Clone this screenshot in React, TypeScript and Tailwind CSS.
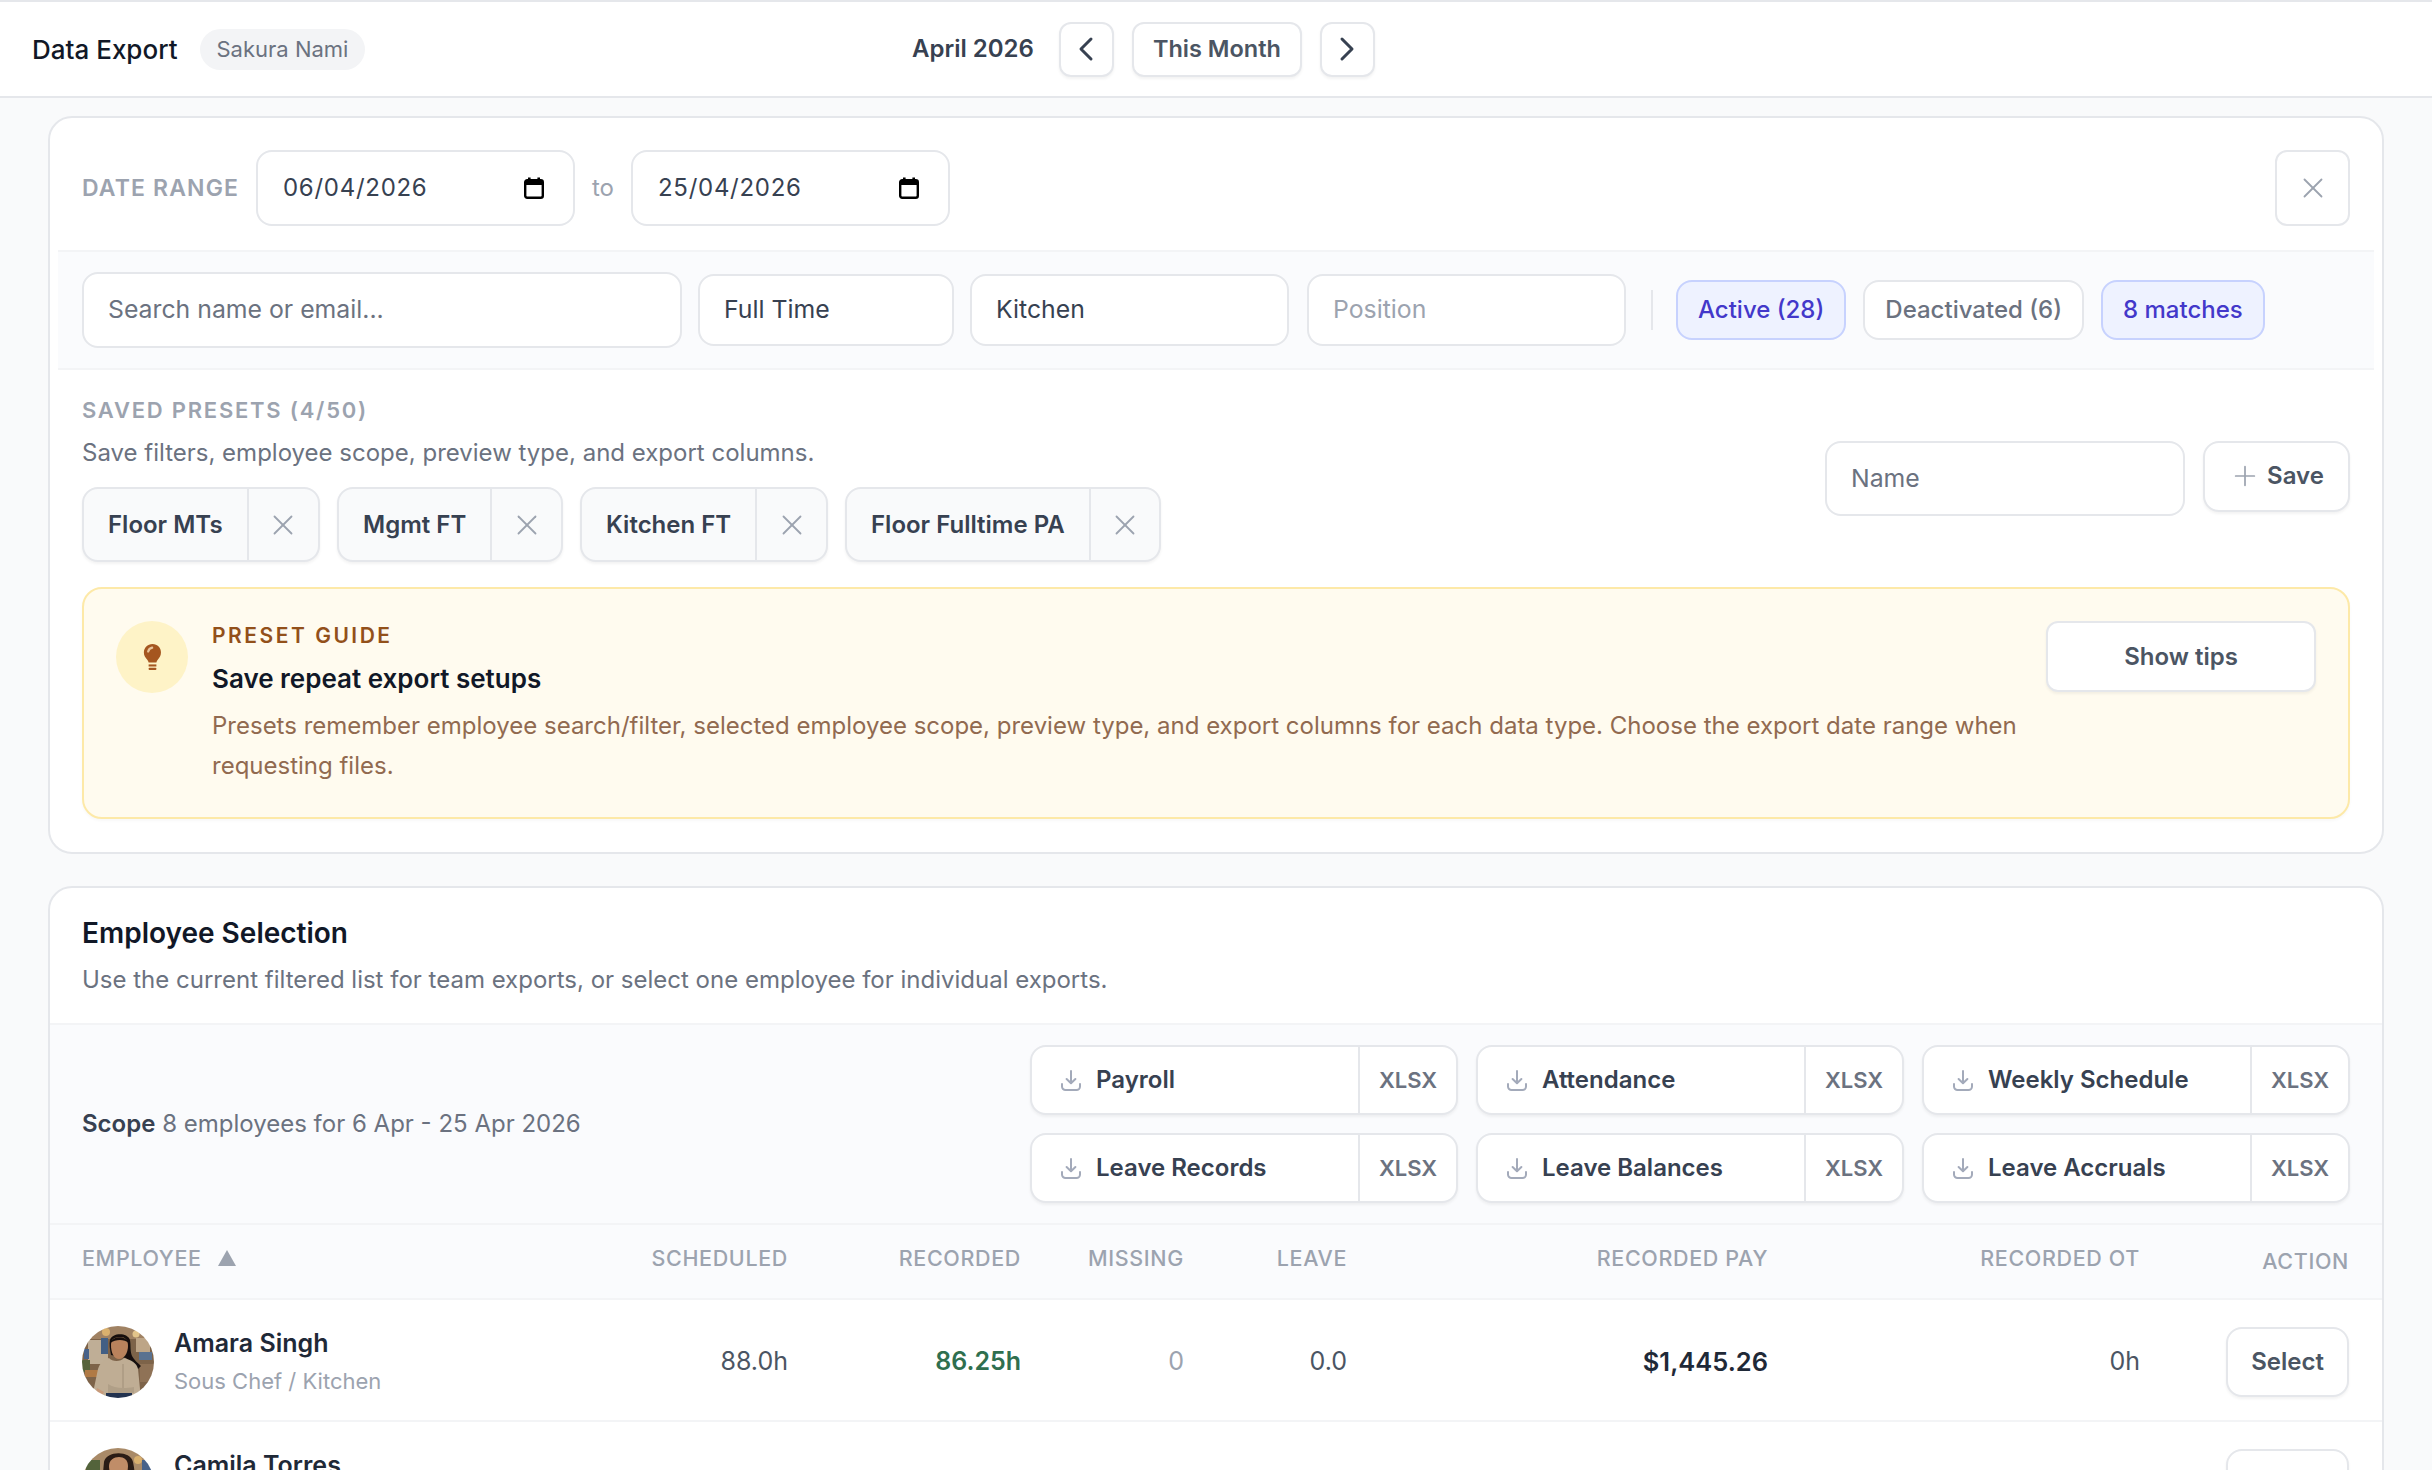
import { ChevronLeft, ChevronRight, X, Plus } from "lucide-react";

function Calendar() {
  return (
    <svg width="20" height="22" viewBox="0 0 20 22" className="shrink-0">
      <rect x="1.2" y="3.2" width="17.6" height="17.6" rx="2" fill="none" stroke="#000" strokeWidth="2.4" />
      <rect x="1" y="3" width="18" height="5" fill="#000" />
      <rect x="4" y="0.5" width="2.6" height="4" fill="#000" />
      <rect x="13.4" y="0.5" width="2.6" height="4" fill="#000" />
    </svg>
  );
}

function DownloadIcon() {
  return (
    <svg width="20" height="21" viewBox="0 0 20 21" fill="none" stroke="#a3aaba" strokeWidth="2" strokeLinecap="round" strokeLinejoin="round" className="shrink-0">
      <path d="M10 1V13" />
      <path d="M5.6 9 10 13.3 14.4 9" />
      <path d="M1 14v2.5A3.5 3.5 0 0 0 4.5 20h11a3.5 3.5 0 0 0 3.5-3.5V14" />
    </svg>
  );
}

function Bulb() {
  return (
    <svg width="19" height="28" viewBox="0 0 22 32">
      <path d="M11 1C5.2 1 1 5.4 1 10.8c0 3.6 1.9 6 3.7 8.2 1 1.2 1.6 2.2 1.8 3.4h9c.2-1.2.8-2.2 1.8-3.4 1.8-2.2 3.5-4.6 3.5-8.2C21 5.4 16.8 1 11 1Z" fill="#a5561f" />
      <path d="M6 9.6C6.6 7.4 8.2 5.8 10.6 5.2" fill="none" stroke="#e9c49c" strokeWidth="2.6" strokeLinecap="round" />
      <rect x="6.5" y="24.6" width="9" height="2.4" fill="#a5561f" />
      <rect x="6.5" y="28.4" width="9" height="2.6" rx="1" fill="#a5561f" />
    </svg>
  );
}

function AmaraAvatar() {
  return (
    <svg width="72" height="72" viewBox="0 0 72 72" className="shrink-0 rounded-full">
      <defs>
        <filter id="soft-a"><feGaussianBlur stdDeviation="0.7" /></filter>
      </defs>
      <g filter="url(#soft-a)">
        <rect width="72" height="72" fill="#7d6349" />
        <rect x="0" y="0" width="72" height="13" fill="#a08264" />
        <rect x="6" y="14" width="20" height="24" fill="#bfae96" />
        <rect x="19" y="12" width="7" height="16" fill="#435f84" />
        <rect x="2" y="23" width="5" height="10" fill="#46628a" />
        <rect x="57" y="26" width="13" height="8" fill="#5a7290" />
        <rect x="54" y="12" width="14" height="14" fill="#bda587" />
        <circle cx="24" cy="6" r="4" fill="#d9b06e" />
        <circle cx="54" cy="8" r="3.5" fill="#e2c48a" />
        <rect x="0" y="34" width="8" height="12" fill="#55643a" />
        <rect x="3" y="44" width="13" height="7" fill="#b07a45" />
        <rect x="58" y="38" width="14" height="18" fill="#8f7256" />
        <path d="M28 14c2-7 17-8 20 0 1 6 0 11 2 16 2 4 6 7 9 10l-3 3c-6-3-10-7-12-11l-15-3c-1-5-2-11-1-15Z" fill="#15110f" />
        <path d="M29 19c0-6 4-8 9-8s8 3 8 9c0 7-4 13-9 13s-8-6-8-14Z" fill="#b9825c" />
        <path d="M28 17c3-7 15-8 19 0-5-4-13-4-19 0Z" fill="#15110f" />
        <path d="M27 32c-6 2-9 5-11 11l-4 19c-1 4 3 8 6 10h36c3-2 4-5 4-9l-2-20c-1-6-7-9-14-11-3 4-12 4-15 0Z" fill="#bfad94" />
        <path d="M41 38v28" stroke="#a08f78" strokeWidth="1" />
        <path d="M26 58c6 4 14 5 26 3v6H26Z" fill="#b09f87" />
        <rect x="24" y="67" width="26" height="5" fill="#203150" />
        <path d="M15 62l-2 6 6 3 3-5Z" fill="#c79a7a" />
      </g>
    </svg>
  );
}

function CamilaAvatar() {
  return (
    <svg width="72" height="72" viewBox="0 0 72 72" className="shrink-0 rounded-full">
      <defs>
        <filter id="soft-c"><feGaussianBlur stdDeviation="0.7" /></filter>
      </defs>
      <g filter="url(#soft-c)">
        <rect width="72" height="72" fill="#a98a68" />
        <rect x="4" y="12" width="14" height="14" fill="#52633a" />
        <rect x="60" y="12" width="12" height="20" fill="#46628a" />
        <circle cx="56" cy="12" r="4" fill="#d9b06e" />
        <path d="M22 14C24 3 48 2 51 14c2 9 2 20 5 30H18c3-10 3-21 4-30Z" fill="#2a1a12" />
        <path d="M27 18c0-6 5-9 10-9s9 3 9 9c0 8-4 15-9 15s-10-7-10-15Z" fill="#c08d68" />
        <path d="M14 72c0-20 10-30 23-30s22 10 22 30Z" fill="#c5b49b" />
      </g>
    </svg>
  );
}

function Pill({ children, active }: { children: React.ReactNode; active?: boolean }) {
  return active ? (
    <span className="flex h-[60px] items-center rounded-[16px] border-2 border-[#c7d2fe] bg-[#eef2ff] px-[20px] text-[24px] font-medium text-[#4338ca]">
      {children}
    </span>
  ) : (
    <span className="flex h-[60px] items-center rounded-[16px] border-2 border-[#e5e7eb] bg-white px-[20px] text-[24px] font-medium text-[#6b7280]">
      {children}
    </span>
  );
}

function Chip({ label, w }: { label: string; w: string }) {
  return (
    <div className={`flex h-[75px] items-stretch rounded-[16px] border-2 border-[#e5e7eb] bg-[#f9fafb] shadow-[0_2px_3px_rgba(0,0,0,0.05)] ${w}`}>
      <span className="flex flex-1 items-center whitespace-nowrap border-r-2 border-[#e5e7eb] px-[24px] text-[24px] font-semibold text-[#374151]">
        {label}
      </span>
      <span className="flex w-[72px] items-center justify-center text-[#9ca3af]">
        <X size={34} strokeWidth={1.3} />
      </span>
    </div>
  );
}

function ExportButton({ label }: { label: string }) {
  return (
    <div className="flex h-[70px] w-[428px] items-stretch rounded-[16px] border-2 border-[#e5e7eb] bg-white shadow-[0_2px_3px_rgba(0,0,0,0.05)]">
      <span className="flex flex-1 items-center gap-[15px] border-r-2 border-[#e5e7eb] pl-[29px] text-[24px] font-semibold text-[#374151]">
        <DownloadIcon />
        {label}
      </span>
      <span className="flex w-[96px] items-center justify-center text-[22px] font-semibold text-[#6b7280]">XLSX</span>
    </div>
  );
}

const gridCols = "grid grid-cols-[452px_254px_233px_163px_163px_421px_372px_209px] items-center";

function Row({ name, sub, avatar, scheduled, recorded, missing, leave, pay, ot }: {
  name: string; sub: string; avatar: React.ReactNode; scheduled: string; recorded: string; missing: string; leave: string; pay: string; ot: string;
}) {
  return (
    <div className={`${gridCols} h-[122px] border-b-2 border-[#f3f4f6] bg-white px-[32px] pt-[4px]`}>
      <div className="flex items-center gap-[20px]">
        {avatar}
        <div className="flex flex-col">
          <span className="text-[25px] leading-[38px] font-semibold text-[#1f2937]">{name}</span>
          <span className="min-h-[38px] text-[22px] leading-[38px] text-[#9ca3af]">{sub}</span>
        </div>
      </div>
      <span className="text-right text-[25px] text-[#4b5563]">{scheduled}</span>
      <span className="text-right text-[25px] font-semibold text-[#2f6f4f]">{recorded}</span>
      <span className="text-right text-[25px] text-[#9ca3af]">{missing}</span>
      <span className="text-right text-[25px] text-[#4b5563]">{leave}</span>
      <span className="text-right text-[25.5px] font-semibold text-[#1f2937]">{pay}</span>
      <span className="text-right text-[25px] text-[#4b5563]">{ot}</span>
      <div className="flex justify-end">
        <span className="flex h-[70px] w-[123px] items-center justify-center rounded-[16px] border-2 border-[#e5e7eb] bg-white text-[24px] font-semibold text-[#4b5563] shadow-[0_2px_3px_rgba(0,0,0,0.05)]">
          Select
        </span>
      </div>
    </div>
  );
}

export default function App() {
  return (
    <div className="h-[1470px] overflow-hidden border-t-2 border-[#e5e7eb] bg-[#f9fafb] [font-family:Inter,sans-serif] antialiased">
      <header className="flex h-[96px] items-center border-b-2 border-[#e5e7eb] bg-white pl-[32px]">
        <div className="flex w-[880px] items-center gap-[22px]">
          <span className="text-[26px] font-medium text-[#111827]">Data Export</span>
          <span className="flex h-[41px] items-center rounded-full bg-[#f3f4f6] px-[17px] text-[22px] text-[#6b7280]">Sakura Nami</span>
        </div>
        <span className="text-[24px] font-semibold text-[#374151]">April 2026</span>
        <div className="ml-[25px] flex items-center gap-[18px]">
          <span className="flex h-[55px] w-[55px] items-center justify-center rounded-[12px] border-2 border-[#e5e7eb] bg-white text-[#374151] shadow-[0_2px_3px_rgba(0,0,0,0.05)]">
            <ChevronLeft size={40} strokeWidth={1.8} />
          </span>
          <span className="flex h-[55px] w-[170px] items-center justify-center rounded-[12px] border-2 border-[#e5e7eb] bg-white text-[23.5px] font-semibold text-[#4b5563] shadow-[0_2px_3px_rgba(0,0,0,0.05)]">
            This Month
          </span>
          <span className="flex h-[55px] w-[55px] items-center justify-center rounded-[12px] border-2 border-[#e5e7eb] bg-white text-[#374151] shadow-[0_2px_3px_rgba(0,0,0,0.05)]">
            <ChevronRight size={40} strokeWidth={1.8} />
          </span>
        </div>
      </header>

      <main className="flex flex-col gap-[32px] px-[48px] pt-[18px]">
        {/* Filters card */}
        <section className="rounded-[24px] border-2 border-[#e5e7eb] bg-white">
          <div className="flex h-[132px] items-start justify-between px-[32px] pt-[32px]">
            <div className="flex items-center">
              <span className="w-[174px] text-[23px] font-semibold tracking-[0.05em] text-[#9ca3af]">DATE RANGE</span>
              <div className="flex h-[76px] w-[319px] items-center justify-between rounded-[16px] border-2 border-[#e5e7eb] bg-white pl-[25px] pr-[29px] text-[24px] tracking-[0.03em] text-[#374151]">
                06/04/2026
                <Calendar />
              </div>
              <span className="w-[56px] text-center text-[24px] text-[#9ca3af]">to</span>
              <div className="flex h-[76px] w-[319px] items-center justify-between rounded-[16px] border-2 border-[#e5e7eb] bg-white pl-[25px] pr-[29px] text-[24px] tracking-[0.03em] text-[#374151]">
                25/04/2026
                <Calendar />
              </div>
            </div>
            <span className="flex h-[76px] w-[75px] items-center justify-center rounded-[12px] border-2 border-[#e5e7eb] bg-white text-[#9ca3af]">
              <X size={34} strokeWidth={1.3} />
            </span>
          </div>

          <div className="mx-[8px] flex h-[120px] items-center border-y-2 border-[#f3f4f6] bg-[#fafbfd] px-[24px]">
            <div className="flex h-[76px] w-[600px] items-center rounded-[16px] border-2 border-[#e5e7eb] bg-white px-[24px] text-[24.8px] text-[#6b7280]">
              Search name or email...
            </div>
            <div className="ml-[16px] flex h-[72px] w-[256px] items-center rounded-[16px] border-2 border-[#e5e7eb] bg-white px-[24px] text-[24.8px] text-[#374151]">
              Full Time
            </div>
            <div className="ml-[16px] flex h-[72px] w-[319px] items-center rounded-[16px] border-2 border-[#e5e7eb] bg-white px-[24px] text-[24.8px] text-[#374151]">
              Kitchen
            </div>
            <div className="ml-[18px] flex h-[72px] w-[319px] items-center rounded-[16px] border-2 border-[#e5e7eb] bg-white px-[24px] text-[24.8px] text-[#9ca3af]">
              Position
            </div>
            <span className="ml-[25px] h-[40px] w-[2px] bg-[#e5e7eb]" />
            <div className="ml-[23px] flex items-center gap-[17px]">
              <Pill active>Active (28)</Pill>
              <Pill>Deactivated (6)</Pill>
              <Pill active>8 matches</Pill>
            </div>
          </div>

          <div className="flex items-center justify-between px-[32px] pt-[24px]">
            <div className="flex flex-col">
              <span className="text-[22px] leading-[32px] font-semibold tracking-[0.08em] text-[#9ca3af]">SAVED PRESETS (4/50)</span>
              <span className="mt-[7px] text-[24px] leading-[40px] text-[#6b7280]">Save filters, employee scope, preview type, and export columns.</span>
              <div className="mt-[14px] flex gap-[17px]">
                <Chip label="Floor MTs" w="w-[238px]" />
                <Chip label="Mgmt FT" w="w-[226px]" />
                <Chip label="Kitchen FT" w="w-[248px]" />
                <Chip label="Floor Fulltime PA" w="w-[316px]" />
              </div>
            </div>
            <div className="flex items-start gap-[18px]">
              <div className="flex h-[75px] w-[360px] items-center rounded-[16px] border-2 border-[#e5e7eb] bg-white px-[24px] pt-[2px] text-[24.8px] text-[#6b7280]">
                Name
              </div>
              <span className="flex h-[71px] w-[147px] items-center justify-center gap-[6px] rounded-[16px] border-2 border-[#e5e7eb] bg-white text-[24px] font-semibold text-[#4b5563] shadow-[0_2px_3px_rgba(0,0,0,0.05)]">
                <Plus size={32} strokeWidth={1.3} className="text-[#9ca3af]" />
                Save
              </span>
            </div>
          </div>

          <div className="mx-[32px] mb-[33px] mt-[25px] flex items-start gap-[24px] rounded-[20px] border-2 border-[#fde9a8] bg-[#fffbef] p-[32px] pb-[31px] shadow-[0_2px_3px_rgba(0,0,0,0.03)]">
            <span className="flex h-[72px] w-[72px] shrink-0 items-center justify-center rounded-full bg-[#fef3c7]">
              <Bulb />
            </span>
            <div className="flex min-w-0 flex-1 flex-col">
              <span className="text-[21px] leading-[30px] font-semibold tracking-[0.12em] text-[#92501a]">PRESET GUIDE</span>
              <span className="mt-[12px] text-[26px] leading-[32px] font-semibold text-[#111827]">Save repeat export setups</span>
              <p className="mt-[11px] text-[24px] leading-[40px] text-[#916a50]">
                Presets remember employee search/filter, selected employee scope, preview type, and export columns for each data type. Choose the export date range when requesting files.
              </p>
            </div>
            <span className="flex h-[71px] w-[270px] shrink-0 items-center justify-center rounded-[12px] border-2 border-[#e5e7eb] bg-white text-[24px] font-semibold text-[#4b5563] shadow-[0_2px_3px_rgba(0,0,0,0.05)]">
              Show tips
            </span>
          </div>
        </section>

        {/* Employee selection card */}
        <section className="rounded-[24px] border-2 border-[#e5e7eb] bg-white">
          <div className="h-[135px] px-[32px] pt-[25px]">
            <h2 className="text-[28px] leading-[40px] font-semibold text-[#111827]">Employee Selection</h2>
            <p className="mt-[7px] text-[24px] leading-[40px] text-[#6b7280]">Use the current filtered list for team exports, or select one employee for individual exports.</p>
          </div>
          <div className="flex h-[202px] items-center justify-between border-y-2 border-[#f3f4f6] bg-[#fafbfd] px-[32px]">
            <p className="text-[24px] text-[#6b7280]">
              <span className="font-semibold text-[#374151]">Scope</span> 8 employees for 6 Apr - 25 Apr 2026
            </p>
            <div className="grid grid-cols-[428px_428px_428px] gap-x-[18px] gap-y-[18px]">
              <ExportButton label="Payroll" />
              <ExportButton label="Attendance" />
              <ExportButton label="Weekly Schedule" />
              <ExportButton label="Leave Records" />
              <ExportButton label="Leave Balances" />
              <ExportButton label="Leave Accruals" />
            </div>
          </div>
          <div className={`${gridCols} h-[75px] border-b-2 border-[#f3f4f6] bg-[#fafbfd] px-[32px] pb-[7px] text-[21.5px] font-medium tracking-[0.03em] text-[#9ca3af]`}>
            <span className="flex items-center gap-[16px]">
              EMPLOYEE
              <svg width="18" height="16" viewBox="0 0 18 16"><path d="M9 0 18 16H0Z" fill="#9ca3af" /></svg>
            </span>
            <span className="text-right">SCHEDULED</span>
            <span className="text-right">RECORDED</span>
            <span className="text-right">MISSING</span>
            <span className="text-right">LEAVE</span>
            <span className="text-right">RECORDED PAY</span>
            <span className="text-right">RECORDED OT</span>
            <span className="pt-[6px] text-right">ACTION</span>
          </div>
          <Row name="Amara Singh" sub="Sous Chef / Kitchen" avatar={<AmaraAvatar />} scheduled="88.0h" recorded="86.25h" missing="0" leave="0.0" pay="$1,445.26" ot="0h" />
          <Row name="Camila Torres" sub="" avatar={<CamilaAvatar />} scheduled="" recorded="" missing="" leave="" pay="" ot="" />
        </section>
      </main>
    </div>
  );
}
